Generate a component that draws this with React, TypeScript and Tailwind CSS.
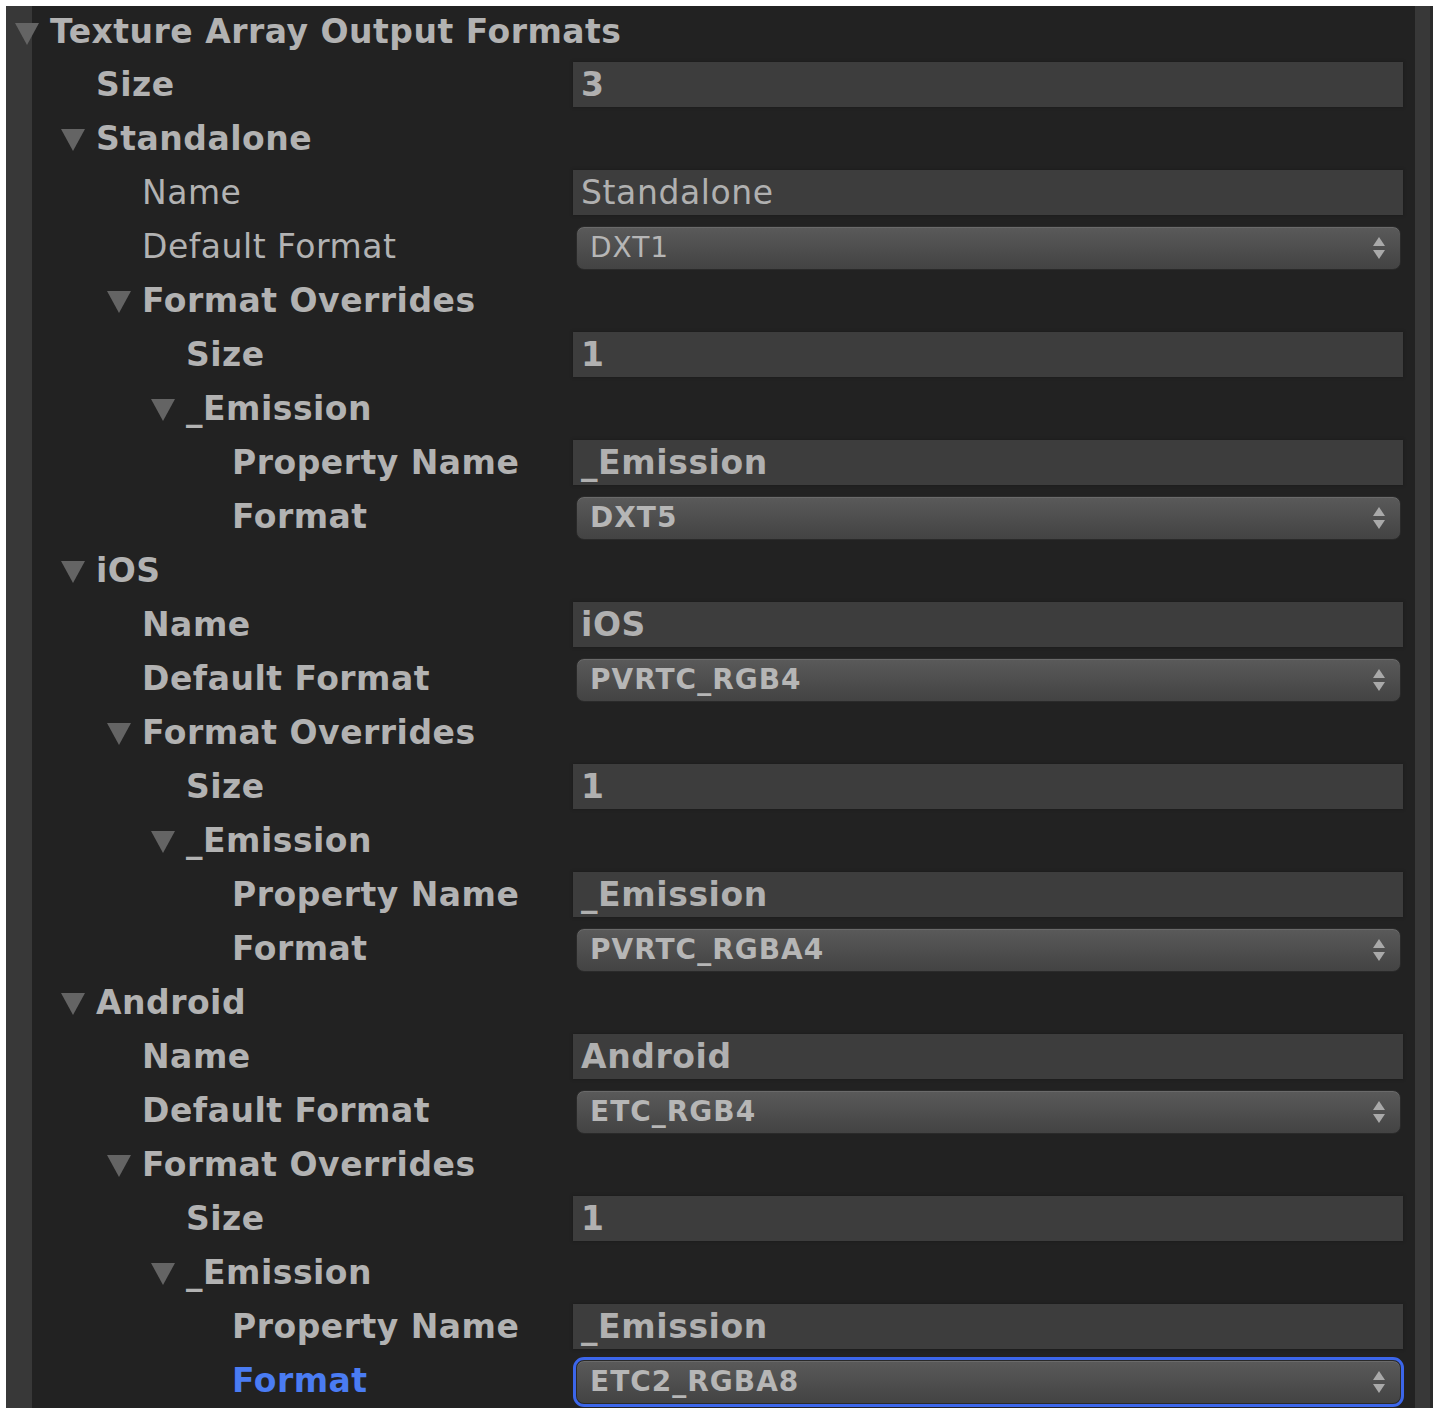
type Field = {
  kind: "text" | "select";
  value: string;
  bold?: boolean;
  focus?: boolean;
};

type Row = {
  level: number;
  label: string;
  fold?: boolean;
  bold?: boolean;
  focus?: boolean;
  field?: Field;
};

const rows: Row[] = [
  { level: 0, label: "Texture Array Output Formats", fold: true, bold: true },
  { level: 1, label: "Size", bold: true, field: { kind: "text", value: "3", bold: true } },
  { level: 1, label: "Standalone", fold: true, bold: true },
  { level: 2, label: "Name", field: { kind: "text", value: "Standalone" } },
  { level: 2, label: "Default Format", field: { kind: "select", value: "DXT1" } },
  { level: 2, label: "Format Overrides", fold: true, bold: true },
  { level: 3, label: "Size", bold: true, field: { kind: "text", value: "1", bold: true } },
  { level: 3, label: "_Emission", fold: true, bold: true },
  { level: 4, label: "Property Name", bold: true, field: { kind: "text", value: "_Emission", bold: true } },
  { level: 4, label: "Format", bold: true, field: { kind: "select", value: "DXT5", bold: true } },
  { level: 1, label: "iOS", fold: true, bold: true },
  { level: 2, label: "Name", bold: true, field: { kind: "text", value: "iOS", bold: true } },
  { level: 2, label: "Default Format", bold: true, field: { kind: "select", value: "PVRTC_RGB4", bold: true } },
  { level: 2, label: "Format Overrides", fold: true, bold: true },
  { level: 3, label: "Size", bold: true, field: { kind: "text", value: "1", bold: true } },
  { level: 3, label: "_Emission", fold: true, bold: true },
  { level: 4, label: "Property Name", bold: true, field: { kind: "text", value: "_Emission", bold: true } },
  { level: 4, label: "Format", bold: true, field: { kind: "select", value: "PVRTC_RGBA4", bold: true } },
  { level: 1, label: "Android", fold: true, bold: true },
  { level: 2, label: "Name", bold: true, field: { kind: "text", value: "Android", bold: true } },
  { level: 2, label: "Default Format", bold: true, field: { kind: "select", value: "ETC_RGB4", bold: true } },
  { level: 2, label: "Format Overrides", fold: true, bold: true },
  { level: 3, label: "Size", bold: true, field: { kind: "text", value: "1", bold: true } },
  { level: 3, label: "_Emission", fold: true, bold: true },
  { level: 4, label: "Property Name", bold: true, field: { kind: "text", value: "_Emission", bold: true } },
  {
    level: 4,
    label: "Format",
    bold: true,
    focus: true,
    field: { kind: "select", value: "ETC2_RGBA8", bold: true, focus: true },
  },
];

// left padding per indent level, for plain labels and for foldouts (arrow + label)
const labelPad = ["pl-[44px]", "pl-[90px]", "pl-[136px]", "pl-[180px]", "pl-[226px]"];
const foldPad = ["pl-[9px]", "pl-[55px]", "pl-[101px]", "pl-[145px]", "pl-[191px]"];

const FoldArrow = () => (
  <svg width="24" height="22" viewBox="0 0 24 22" className="mr-[11px] mt-[4px] shrink-0">
    <polygon points="0,0 24,0 12,22" fill="#646464" />
  </svg>
);

const PopupArrows = () => (
  <svg width="12" height="22" viewBox="0 0 12 22" className="shrink-0">
    <polygon points="6,0 12,9 0,9" fill="#a9a9a9" />
    <polygon points="0,13 12,13 6,22" fill="#a9a9a9" />
  </svg>
);

const TextField = ({ field }: { field: Field }) => (
  <div className="mt-[5px] h-[45px] bg-[#3d3d3d] shadow-[0_0_2px_1px_#1e1e1e] flex items-center pl-[8px]">
    <span
      className={`text-[33px] leading-none tracking-[0.6px] text-[#b0b0b0] ${
        field.bold ? "font-bold" : "font-normal"
      }`}
    >
      {field.value}
    </span>
  </div>
);

const SelectField = ({ field }: { field: Field }) => (
  <div
    className={`mt-[7px] ml-[3px] mr-[2px] h-[44px] rounded-[8px] border border-[#2a2a2a] bg-gradient-to-b from-[#5a5a5a] to-[#434343] shadow-[inset_0_1px_0_#6a6a6a] flex items-center justify-between pl-[13px] pr-[15px] ${
      field.focus ? "outline outline-[3px] outline-[#3c66ea]" : ""
    }`}
  >
    <span
      className={`text-[28px] leading-none tracking-[1px] text-[#b6b6b6] ${
        field.bold ? "font-bold" : "font-normal"
      }`}
    >
      {field.value}
    </span>
    <PopupArrows />
  </div>
);

const InspectorRow = ({ row, first }: { row: Row; first: boolean }) => {
  const pad = row.fold ? foldPad[row.level] : labelPad[row.level];
  const labelColor = row.focus ? "text-[#4a7cf3]" : "text-[#b2b2b2]";
  return (
    <div className={`flex shrink-0 ${first ? "h-[51px]" : "h-[54px]"}`}>
      <div className={`w-[567px] shrink-0 flex items-center ${pad}`}>
        {row.fold && <FoldArrow />}
        <span
          className={`text-[33px] leading-none tracking-[0.5px] whitespace-nowrap ${labelColor} ${
            row.bold ? "font-bold" : "font-normal"
          }`}
        >
          {row.label}
        </span>
      </div>
      <div className="w-[830px] shrink-0">
        {row.field?.kind === "text" && <TextField field={row.field} />}
        {row.field?.kind === "select" && <SelectField field={row.field} />}
      </div>
    </div>
  );
};

export default function App() {
  return (
    <div
      className="w-[1433px] h-[1408px] bg-white pt-[6px] pl-[6px] flex overflow-hidden"
      style={{ fontFamily: '"DejaVu Sans", Verdana, sans-serif' }}
    >
      <div className="w-[1409px] h-full flex flex-col bg-[linear-gradient(to_right,#383838_26px,#222222_26px)]">
        {rows.map((row, i) => (
          <InspectorRow key={i} row={row} first={i === 0} />
        ))}
      </div>
      <div className="w-[15px] h-full bg-[#383838]" />
      <div className="w-[3px] h-full bg-[#2a2a2a]" />
    </div>
  );
}
